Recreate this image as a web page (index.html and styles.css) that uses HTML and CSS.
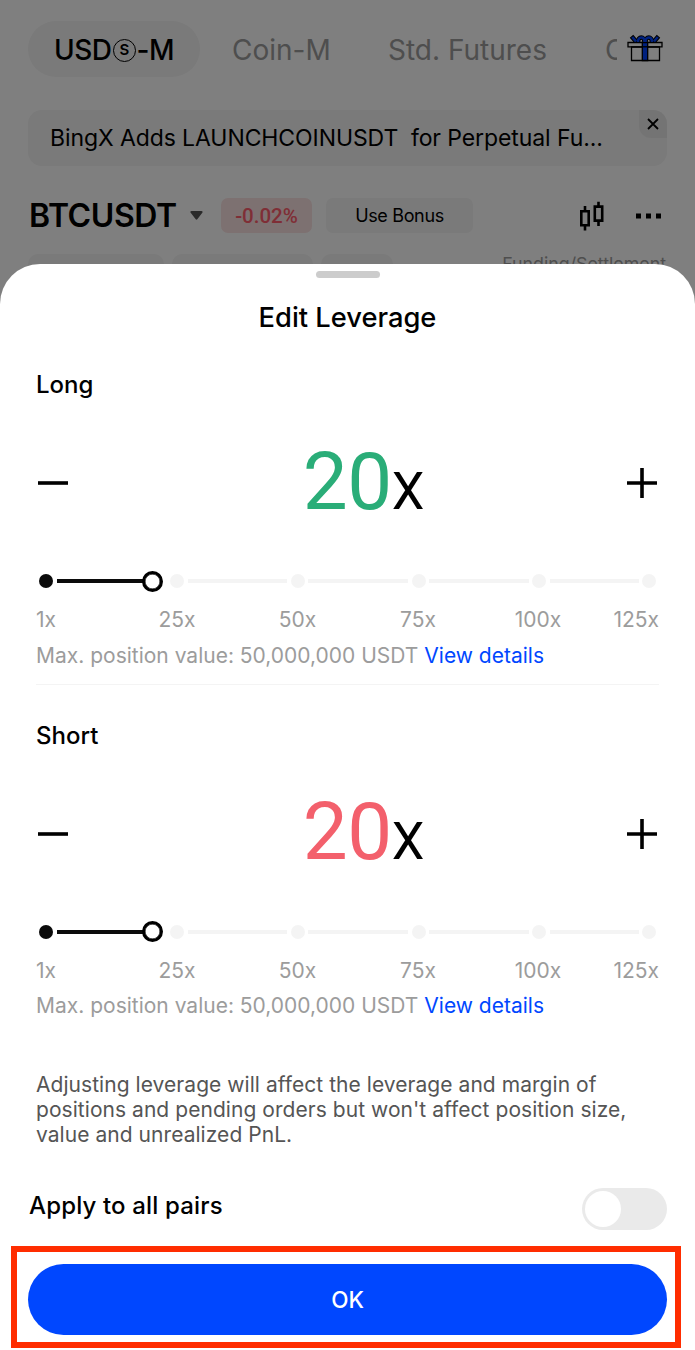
FILE: index.html
```html
<!DOCTYPE html>
<html lang="en">
  <head>
    <meta charset="UTF-8" />
    <meta name="viewport" content="width=device-width, initial-scale=1.0" />
    <title>Edit Leverage</title>
    <link rel="stylesheet" href="styles.css">
  </head>
  <body>
    <div class="page">
      <nav class="tabs">
        <span class="tab active">USD<i class="coin">S</i>-M</span>
        <span class="tab coin-m">Coin-M</span>
        <span class="tab std">Std. Futures</span>
        <span class="tab cut">C</span>
        <svg class="gift" width="36" height="28" viewBox="0 0 36 28">
          <g fill="none" stroke="#000" stroke-width="1.3">
            <path d="M4.5 13h28v13.5h-28z" />
            <path d="M1 8.5h34v4.3H1z" />
            <path d="M15.3 8.5h5.4v18h-5.4z" fill="#0042ff" />
            <path d="M15.3 12.8h5.4" />
          </g>
          <g fill="none" stroke="#000" stroke-width="4.6">
            <path d="M4.5 2.2l4.5 5.3M31.5 2.2L27 7.5" />
            <path d="M11 8c0-6 6.500-6 6.500 0M18.500 8c0-6 6.500-6 6.500 0" />
          </g>
          <g fill="none" stroke="#0042ff" stroke-width="2.6">
            <path d="M5.2 3l3.800 4.500M30.800 3L27 7.500" />
            <path d="M11 8c0-6 6.500-6 6.500 0M18.500 8c0-6 6.500-6 6.500 0" />
          </g>
        </svg>
      </nav>

      <div class="notice">
        <span class="notice-text">BingX Adds LAUNCHCOINUSDT&nbsp; for Perpetual Fu...</span>
        <span class="notice-close">
          <svg width="12" height="12" viewBox="0 0 12 12">
            <path d="M1 1l10 10M11 1L1 11" stroke="#000" stroke-width="1.8" />
          </svg>
        </span>
      </div>

      <div class="pair">
        <span class="pair-name">BTCUSDT</span>
        <svg class="arrow" width="13" height="9" viewBox="0 0 13 9">
          <path d="M1.5 0h10c1 0 1.5 1 .8 1.8L7.3 8.2c-.5.6-1.1.6-1.6 0L.7 1.8C0 1 .5 0 1.500 0z" fill="#555" />
        </svg>
        <span class="change">-0.02%</span>
        <span class="bonus">Use Bonus</span>
        <svg class="candles" width="26" height="30" viewBox="0 0 26 30">
          <g fill="none" stroke="#000" stroke-width="2.6">
            <path d="M2.3 10.3h7.4v14H2.3zM6 5v5M6 24v5.5" />
            <path d="M15.8 5.6h7.4v14h-7.4zM19.5 .8v5M19.5 19.5v5.5" />
          </g>
        </svg>
        <svg class="dots" width="26" height="6" viewBox="0 0 26 6">
          <path d="M0 .5h5v5H0zM10 .5h5v5h-5zM20 .5h5v5h-5z" />
        </svg>
      </div>

      <div class="chips">
        <span class="chip one"></span>
        <span class="chip two"></span>
        <span class="chip three"></span>
        <span class="funding">Funding/Settlement</span>
      </div>
    </div>
    <div class="overlay"></div>

    <div class="sheet">
      <div class="handle"></div>
      <h1>Edit Leverage</h1>

      <section class="side long">
        <h2>Long</h2>
        <div class="stepper">
          <svg width="30" height="30" viewBox="0 0 30 30">
            <path d="M0 15h30" stroke="#000" stroke-width="3.6" />
          </svg>
          <div class="value"><span class="number">20</span><span class="times">X</span></div>
          <svg width="30" height="30" viewBox="0 0 30 30">
            <path d="M0 15h30M15 0v30" stroke="#000" stroke-width="3.6" />
          </svg>
        </div>
        <div class="slider">
          <span class="dot on"></span>
          <span class="bar filled"><span class="thumb"></span></span>
          <span class="dot"></span>
          <span class="bar"></span>
          <span class="dot"></span>
          <span class="bar"></span>
          <span class="dot"></span>
          <span class="bar"></span>
          <span class="dot"></span>
          <span class="bar"></span>
          <span class="dot"></span>
        </div>
        <div class="marks">
          <span>1x</span><span>25x</span><span>50x</span><span>75x</span><span>100x</span><span>125x</span>
        </div>
        <p class="max">Max. position value: 50,000,000 USDT <a>View details</a></p>
      </section>

      <section class="side short">
        <h2>Short</h2>
        <div class="stepper">
          <svg width="30" height="30" viewBox="0 0 30 30">
            <path d="M0 15h30" stroke="#000" stroke-width="3.6" />
          </svg>
          <div class="value"><span class="number">20</span><span class="times">X</span></div>
          <svg width="30" height="30" viewBox="0 0 30 30">
            <path d="M0 15h30M15 0v30" stroke="#000" stroke-width="3.6" />
          </svg>
        </div>
        <div class="slider">
          <span class="dot on"></span>
          <span class="bar filled"><span class="thumb"></span></span>
          <span class="dot"></span>
          <span class="bar"></span>
          <span class="dot"></span>
          <span class="bar"></span>
          <span class="dot"></span>
          <span class="bar"></span>
          <span class="dot"></span>
          <span class="bar"></span>
          <span class="dot"></span>
        </div>
        <div class="marks">
          <span>1x</span><span>25x</span><span>50x</span><span>75x</span><span>100x</span><span>125x</span>
        </div>
        <p class="max">Max. position value: 50,000,000 USDT <a>View details</a></p>
      </section>

      <p class="hint">
        Adjusting leverage will affect the leverage and margin of<br />
        positions and pending orders but won't affect position size,<br />
        value and unrealized PnL.
      </p>

      <div class="apply">
        <span>Apply to all pairs</span>
        <span class="toggle"></span>
      </div>

      <div class="highlight">
        <button class="ok">OK</button>
      </div>
    </div>
  </body>
</html>
```

FILE: styles.css
```css
* {
  box-sizing: border-box;
}
body {
  margin: 0;
  position: relative;
  height: 1350px;
  overflow: hidden;
  background-color: #fff;
  font-family: Inter, "Liberation Sans", sans-serif;
  color: #000;
}
h1,
h2,
p {
  margin: 0;
}
.page {
  height: 330px;
  padding: 21px 28px 0;
  overflow: hidden;
}
.tabs {
  display: flex;
  align-items: center;
  height: 56px;
}
.tab {
  padding-top: 2px;
  font-size: 28px;
  line-height: 54px;
  color: #9c9c9c;
  white-space: nowrap;
}
.tab.active {
  display: flex;
  align-items: center;
  width: 172px;
  height: 56px;
  padding-left: 26px;
  border-radius: 28px;
  background-color: #f4f4f4;
  color: #000;
  font-weight: 500;
  letter-spacing: -0.5px;
}
.coin {
  width: 23px;
  height: 23px;
  margin: 0 1px;
  border: 1.5px solid #000;
  border-radius: 50%;
  font-size: 15px;
  font-style: normal;
  font-weight: 600;
  line-height: 20px;
  text-align: center;
}
.coin-m {
  width: 156px;
  padding-left: 32px;
}
.std {
  width: 249px;
  padding-left: 32px;
}
.cut {
  width: 12px;
  overflow: hidden;
}
.gift {
  margin: -2px 0 0 10px;
}
.notice {
  display: flex;
  justify-content: space-between;
  height: 56px;
  margin-top: 32.5px;
  padding-left: 22px;
  border-radius: 14px;
  background-color: #f4f4f4;
  overflow: hidden;
}
.notice-text {
  font-size: 23px;
  letter-spacing: -0.09px;
  line-height: 57px;
  white-space: nowrap;
}
.notice-close {
  display: flex;
  align-items: center;
  justify-content: center;
  width: 28px;
  height: 28px;
  border-radius: 0 0 0 12px;
  background-color: #e9e9e9;
}
.pair {
  display: flex;
  align-items: center;
  height: 36px;
  margin-top: 32px;
}
.pair-name {
  width: 162px;
  padding-left: 1px;
  font-size: 32px;
  font-weight: 600;
  letter-spacing: -0.4px;
  line-height: 36px;
}
.change {
  width: 91px;
  height: 35px;
  margin-left: 18px;
  border-radius: 7px;
  background-color: #fbe2e2;
  color: #ff5c6c;
  font-family: Roboto, sans-serif;
  font-size: 20.5px;
  font-weight: 500;
  line-height: 36px;
  text-align: center;
}
.bonus {
  width: 147px;
  height: 35px;
  margin-left: 14px;
  border-radius: 7px;
  background-color: #f4f4f4;
  font-size: 18px;
  letter-spacing: -0.35px;
  line-height: 35px;
  text-align: center;
}
.candles {
  margin-left: 106px;
}
.dots {
  margin-left: 31px;
}
.chips {
  display: flex;
  margin-top: 20px;
}
.chip {
  height: 40px;
  margin-right: 8px;
  border-radius: 10px;
  background-color: #f4f4f4;
}
.one {
  width: 136px;
}
.two {
  width: 141px;
}
.three {
  width: 72px;
}
.funding {
  margin-left: auto;
  margin-right: 1px;
  color: #9c9c9c;
  font-size: 17.8px;
  line-height: 19px;
}
.overlay {
  position: absolute;
  inset: 0;
  background-color: rgba(0, 0, 0, 0.5);
}
.sheet {
  position: absolute;
  top: 264px;
  left: 0;
  right: 0;
  height: 1086px;
  padding-top: 7px;
  border-radius: 40px 40px 0 0;
  background-color: #fff;
}
.handle {
  width: 64px;
  height: 7px;
  margin: 0 auto;
  border-radius: 4px;
  background-color: #ccc;
}
h1 {
  height: 31px;
  margin-top: 24px;
  font-size: 27.3px;
  font-weight: 500;
  line-height: 32px;
  text-align: center;
}
.side {
  margin: 0 36px;
}
.long {
  height: 351.5px;
  padding-top: 37px;
  border-bottom: 1.5px solid #f4f4f4;
}
.short {
  padding-top: 36px;
}
h2 {
  font-size: 24px;
  font-weight: 500;
  line-height: 30px;
}
.stepper {
  display: flex;
  align-items: center;
  justify-content: space-between;
  height: 80px;
  margin-top: 43px;
  padding: 0 2px;
}
.value {
  display: flex;
  align-items: baseline;
  padding: 7px 0 0 33px;
  font-family: Roboto, sans-serif;
  line-height: 80px;
}
.number {
  margin-left: -1px;
  font-size: 80px;
  letter-spacing: -0.5px;
}
.times {
  font-size: 52px;
}
.long .number {
  color: #2aad78;
}
.short .number {
  color: #f3606c;
}
.slider {
  display: grid;
  grid-template-columns: 14px 117px 14px 106.5px 14px 107px 14px 106.5px 14px 96px 14px;
  align-items: center;
  height: 22px;
  margin-top: 47px;
  padding-left: 3px;
}
.dot {
  height: 14px;
  border-radius: 50%;
  background-color: #f4f4f4;
}
.dot.on {
  background-color: #0b0b0b;
}
.bar {
  height: 4px;
  margin: 0 3.5px;
  background-color: #f4f4f4;
}
.bar.filled {
  position: relative;
  margin-right: 20px;
  background-color: #0b0b0b;
}
.thumb {
  position: absolute;
  right: -13px;
  top: -8.5px;
  width: 21px;
  height: 21px;
  border: 3px solid #000;
  border-radius: 50%;
  background-color: #fff;
  box-shadow: inset 0 0 0 0.5px #000;
}
.marks {
  display: grid;
  grid-template-columns: 81px 120px 121px 120px 120px 1fr;
  margin-top: 14px;
  color: #9c9c9c;
  font-size: 21px;
  line-height: 27px;
  text-align: center;
}
.marks span:first-child {
  text-align: left;
}
.marks span:last-child {
  text-align: right;
}
.max {
  margin-top: 8.5px;
  color: #9c9c9c;
  font-size: 21px;
  line-height: 28px;
  white-space: nowrap;
}
.max a {
  color: #0047ff;
}
.hint {
  margin: 51.5px 36px 0;
  color: #555;
  font-size: 21px;
  letter-spacing: 0.05px;
  line-height: 25.2px;
  white-space: nowrap;
}
.apply {
  display: flex;
  justify-content: space-between;
  margin-top: 41px;
  padding: 0 28px 0 29px;
  font-size: 24px;
  font-weight: 500;
  letter-spacing: 0.15px;
  line-height: 36px;
}
.toggle {
  width: 85px;
  height: 42px;
  padding: 3px;
  border-radius: 21px;
  background-color: #eaeaea;
}
.toggle::before {
  content: "";
  display: block;
  width: 36px;
  height: 36px;
  border-radius: 50%;
  background-color: #fff;
}
.highlight {
  width: 670px;
  height: 102px;
  margin: 16px 0 0 11px;
  padding: 12px 8px 0 11px;
  border: 6px solid #ff2d00;
}
.ok {
  display: block;
  width: 639px;
  height: 71px;
  padding: 0;
  border: none;
  border-radius: 36px;
  background-color: #0047ff;
  color: #fff;
  font-family: inherit;
  font-size: 22.5px;
  font-weight: 500;
}
```
